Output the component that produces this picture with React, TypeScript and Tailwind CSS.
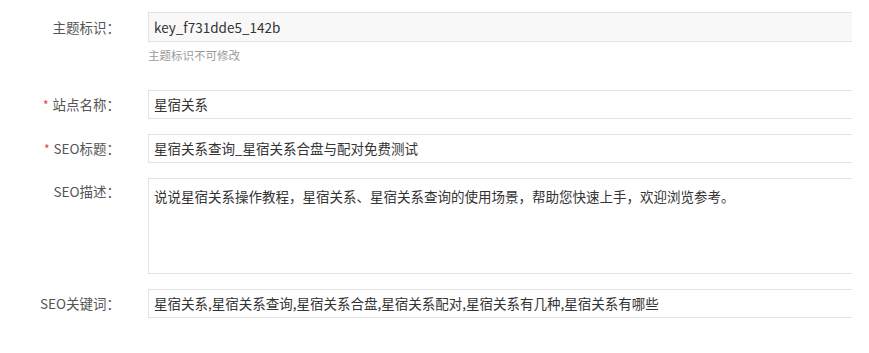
import React from "react";

const font = { fontFamily: '"Noto Sans CJK SC", "Noto Sans", sans-serif' };

function Label({ text, required, top }: { text: string; required?: boolean; top?: boolean }) {
  return (
    <div
      className={`w-[120px] shrink-0 flex justify-end text-[13.5px] text-[#555] ${top ? "items-start leading-[27px]" : "items-center"}`}
    >
      {required && <span className="text-[#e5413c] text-[12px] mr-[4px] leading-none">*</span>}
      <span>{text}</span>
    </div>
  );
}

export default function App() {
  return (
    <div className="w-[869px] h-[353px] bg-white pt-[12px]" style={font}>
      {/* 主题标识 */}
      <div className="flex">
        <Label text="主题标识：" />
        <div className="ml-[28px] w-[704px] overflow-hidden">
          <div className="w-[720px] h-[30px] border border-[#e2e2e2] bg-[#f8f8f8] flex items-center pl-[5px] text-[13.5px] text-[#333]">
            key_f731dde5_142b
          </div>
        </div>
      </div>
      <div className="flex">
        <div className="w-[148px] shrink-0" />
        <div className="mt-[6px] text-[11.5px] leading-[14px] text-[#9a9a9a]">主题标识不可修改</div>
      </div>

      {/* 站点名称 */}
      <div className="flex mt-[28px]">
        <Label text="站点名称：" required />
        <div className="ml-[28px] w-[704px] overflow-hidden">
          <div className="w-[720px] h-[29px] border border-[#e2e2e2] bg-white flex items-center pl-[5px] text-[13.5px] text-[#333]">
            星宿关系
          </div>
        </div>
      </div>

      {/* SEO标题 */}
      <div className="flex mt-[15px]">
        <Label text="SEO标题：" required />
        <div className="ml-[28px] w-[704px] overflow-hidden">
          <div className="w-[720px] h-[29px] border border-[#e2e2e2] bg-white flex items-center pl-[5px] text-[13.5px] text-[#333]">
            星宿关系查询_星宿关系合盘与配对免费测试
          </div>
        </div>
      </div>

      {/* SEO描述 */}
      <div className="flex mt-[15px]">
        <Label text="SEO描述：" top />
        <div className="ml-[28px] w-[704px] overflow-hidden">
          <div className="w-[720px] h-[96px] border border-[#e2e2e2] bg-white pl-[5px] pt-[6px] text-[13.5px] leading-[22px] text-[#333]">
            说说星宿关系操作教程，星宿关系、星宿关系查询的使用场景，帮助您快速上手，欢迎浏览参考。
          </div>
        </div>
      </div>

      {/* SEO关键词 */}
      <div className="flex mt-[15px]">
        <Label text="SEO关键词：" />
        <div className="ml-[28px] w-[704px] overflow-hidden">
          <div className="w-[720px] h-[29px] border border-[#e2e2e2] bg-white flex items-center pl-[5px] text-[13.5px] text-[#333]">
            星宿关系,星宿关系查询,星宿关系合盘,星宿关系配对,星宿关系有几种,星宿关系有哪些
          </div>
        </div>
      </div>
    </div>
  );
}
